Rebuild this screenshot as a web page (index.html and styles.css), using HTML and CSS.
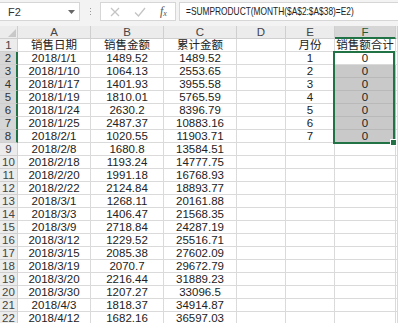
FILE: index.html
```html
<!DOCTYPE html>
<html>
<head>
<meta charset="utf-8">
<link rel="stylesheet" href="styles.css">
</head>
<body>
<div class="bar">
  <div class="namebox"><span>F2</span><svg class="dd" width="7" height="4" viewBox="0 0 7 4"><path d="M0 0H7L3.5 4Z" fill="#666"/></svg></div>
  <div class="dots"><i></i><i></i><i></i></div>
  <div class="btns">
    <svg width="10" height="10" viewBox="0 0 10 10"><path d="M1 1L9 9M9 1L1 9" stroke="#c4c4c4" stroke-width="1.3"/></svg>
    <svg width="12" height="10" viewBox="0 0 12 10"><path d="M1 5.5L4.5 9L11 1" stroke="#c4c4c4" stroke-width="1.3" fill="none"/></svg>
    <span class="fx">f<sub>x</sub></span>
  </div>
  <div class="formula"><span class="ftext">=SUMPRODUCT(MONTH($A$2:$A$38)=E2)</span></div>
</div>
<div class="sheet">
  <div class="row hdr"><div class="h corner"><svg width="8" height="8" viewBox="0 0 8 8"><path d="M8 0V8H0Z" fill="#c8c8c8"/></svg></div><div class="h">A</div><div class="h">B</div><div class="h">C</div><div class="h">D</div><div class="h">E</div><div class="h selcol">F</div><div class="h"></div></div>
  <div class="row"><div class="h">1</div><div class="c">销售日期</div><div class="c">销售金额</div><div class="c">累计金额</div><div class="c"></div><div class="c">月份</div><div class="c">销售额合计</div><div class="c"></div></div>
  <div class="row"><div class="h selrow">2</div><div class="c">2018/1/1</div><div class="c">1489.52</div><div class="c">1489.52</div><div class="c"></div><div class="c">1</div><div class="c act">0</div><div class="c"></div></div>
  <div class="row"><div class="h selrow">3</div><div class="c">2018/1/10</div><div class="c">1064.13</div><div class="c">2553.65</div><div class="c"></div><div class="c">2</div><div class="c sel">0</div><div class="c"></div></div>
  <div class="row"><div class="h selrow">4</div><div class="c">2018/1/17</div><div class="c">1401.93</div><div class="c">3955.58</div><div class="c"></div><div class="c">3</div><div class="c sel">0</div><div class="c"></div></div>
  <div class="row"><div class="h selrow">5</div><div class="c">2018/1/19</div><div class="c">1810.01</div><div class="c">5765.59</div><div class="c"></div><div class="c">4</div><div class="c sel">0</div><div class="c"></div></div>
  <div class="row"><div class="h selrow">6</div><div class="c">2018/1/24</div><div class="c">2630.2</div><div class="c">8396.79</div><div class="c"></div><div class="c">5</div><div class="c sel">0</div><div class="c"></div></div>
  <div class="row"><div class="h selrow">7</div><div class="c">2018/1/25</div><div class="c">2487.37</div><div class="c">10883.16</div><div class="c"></div><div class="c">6</div><div class="c sel">0</div><div class="c"></div></div>
  <div class="row"><div class="h selrow">8</div><div class="c">2018/2/1</div><div class="c">1020.55</div><div class="c">11903.71</div><div class="c"></div><div class="c">7</div><div class="c sel">0</div><div class="c"></div></div>
  <div class="row"><div class="h">9</div><div class="c">2018/2/8</div><div class="c">1680.8</div><div class="c">13584.51</div><div class="c"></div><div class="c"></div><div class="c"></div><div class="c"></div></div>
  <div class="row"><div class="h">10</div><div class="c">2018/2/18</div><div class="c">1193.24</div><div class="c">14777.75</div><div class="c"></div><div class="c"></div><div class="c"></div><div class="c"></div></div>
  <div class="row"><div class="h">11</div><div class="c">2018/2/20</div><div class="c">1991.18</div><div class="c">16768.93</div><div class="c"></div><div class="c"></div><div class="c"></div><div class="c"></div></div>
  <div class="row"><div class="h">12</div><div class="c">2018/2/22</div><div class="c">2124.84</div><div class="c">18893.77</div><div class="c"></div><div class="c"></div><div class="c"></div><div class="c"></div></div>
  <div class="row"><div class="h">13</div><div class="c">2018/3/1</div><div class="c">1268.11</div><div class="c">20161.88</div><div class="c"></div><div class="c"></div><div class="c"></div><div class="c"></div></div>
  <div class="row"><div class="h">14</div><div class="c">2018/3/3</div><div class="c">1406.47</div><div class="c">21568.35</div><div class="c"></div><div class="c"></div><div class="c"></div><div class="c"></div></div>
  <div class="row"><div class="h">15</div><div class="c">2018/3/9</div><div class="c">2718.84</div><div class="c">24287.19</div><div class="c"></div><div class="c"></div><div class="c"></div><div class="c"></div></div>
  <div class="row"><div class="h">16</div><div class="c">2018/3/12</div><div class="c">1229.52</div><div class="c">25516.71</div><div class="c"></div><div class="c"></div><div class="c"></div><div class="c"></div></div>
  <div class="row"><div class="h">17</div><div class="c">2018/3/15</div><div class="c">2085.38</div><div class="c">27602.09</div><div class="c"></div><div class="c"></div><div class="c"></div><div class="c"></div></div>
  <div class="row"><div class="h">18</div><div class="c">2018/3/19</div><div class="c">2070.7</div><div class="c">29672.79</div><div class="c"></div><div class="c"></div><div class="c"></div><div class="c"></div></div>
  <div class="row"><div class="h">19</div><div class="c">2018/3/20</div><div class="c">2216.44</div><div class="c">31889.23</div><div class="c"></div><div class="c"></div><div class="c"></div><div class="c"></div></div>
  <div class="row"><div class="h">20</div><div class="c">2018/3/30</div><div class="c">1207.27</div><div class="c">33096.5</div><div class="c"></div><div class="c"></div><div class="c"></div><div class="c"></div></div>
  <div class="row"><div class="h">21</div><div class="c">2018/4/3</div><div class="c">1818.37</div><div class="c">34914.87</div><div class="c"></div><div class="c"></div><div class="c"></div><div class="c"></div></div>
  <div class="row"><div class="h">22</div><div class="c">2018/4/12</div><div class="c">1682.16</div><div class="c">36597.03</div><div class="c"></div><div class="c"></div><div class="c"></div><div class="c"></div></div>
  <div class="selection"><span class="handle"></span></div>
</div>
</body>
</html>
```
FILE: styles.css
```css
html, body { margin: 0; padding: 0; }
body {
  width: 398px; height: 323px; overflow: hidden;
  background: #fff;
  font-family: "Liberation Sans", "Noto Sans CJK SC", sans-serif;
  color: #222;
}
.bar {
  height: 26px; background: #f3f3f3;
  display: flex; align-items: flex-start; padding-top: 2px; box-sizing: border-box;
}
.namebox {
  width: 80px; height: 19px; box-sizing: border-box;
  background: #fff; border: 1px solid #d6d6d6; border-left: none;
  display: flex; align-items: center; justify-content: space-between;
  padding: 0 4px 0 8px; font-size: 11px; color: #333;
}
.dots {
  width: 20px; height: 19px; display: flex; flex-direction: column;
  align-items: center; justify-content: center; gap: 2px;
}
.dots i { width: 1px; height: 1px; background: #999; display: block; }
.btns {
  width: 76px; height: 19px; box-sizing: border-box; background: #fff;
  border: 1px solid #d6d6d6; display: flex; align-items: center;
  padding-left: 9px; gap: 14px;
}
.fx { font-family: "Liberation Serif", serif; font-style: italic; font-size: 12px; color: #555; }
.fx sub { font-size: 8px; vertical-align: -1px; }
.formula {
  flex: 1; height: 19px; margin-left: 3px; box-sizing: border-box;
  background: #fff; border: 1px solid #d6d6d6; border-right: none;
  font-size: 11px; line-height: 17px; padding-left: 6px; color: #222;
  white-space: nowrap; overflow: hidden;
}
.ftext { display: inline-block; transform: scaleX(0.76); transform-origin: left center; }
.sheet { position: relative; }
.row {
  display: grid; height: 13px;
  grid-template-columns: 18px 73px 73px 73px 49px 49px 61px 2px;
}
.h, .c {
  box-sizing: border-box; height: 13px; overflow: hidden; white-space: nowrap;
  display: flex; align-items: center; justify-content: center;
  font-size: 11.5px; line-height: 12px;
  border-right: 1px solid #dadada; border-bottom: 1px solid #dadada;
}
.h { background: #ececec; color: #444; border-color: #cfcfcf; }
.c { color: #222; }
.corner { justify-content: flex-end; align-items: flex-end; }
.corner svg { display: block; margin: 0 1px 1px 0; }
.selcol { background: #d6d6d6; border-bottom: 2px solid #217346; color: #1d5c38; }
.selrow { background: #d6d6d6; border-right: 2px solid #217346; color: #333; }
.sel { background: #c9c9c9; border-color: #b9b9b9; }
.act { background: #fff; }
.selection {
  position: absolute; left: 333px; top: 25px; width: 62px; height: 93px;
  box-sizing: border-box; border: 2px solid #217346; pointer-events: none;
}
.handle {
  position: absolute; right: -4px; bottom: -4px; width: 5px; height: 5px;
  background: #217346; border: 1px solid #fff;
}
```
